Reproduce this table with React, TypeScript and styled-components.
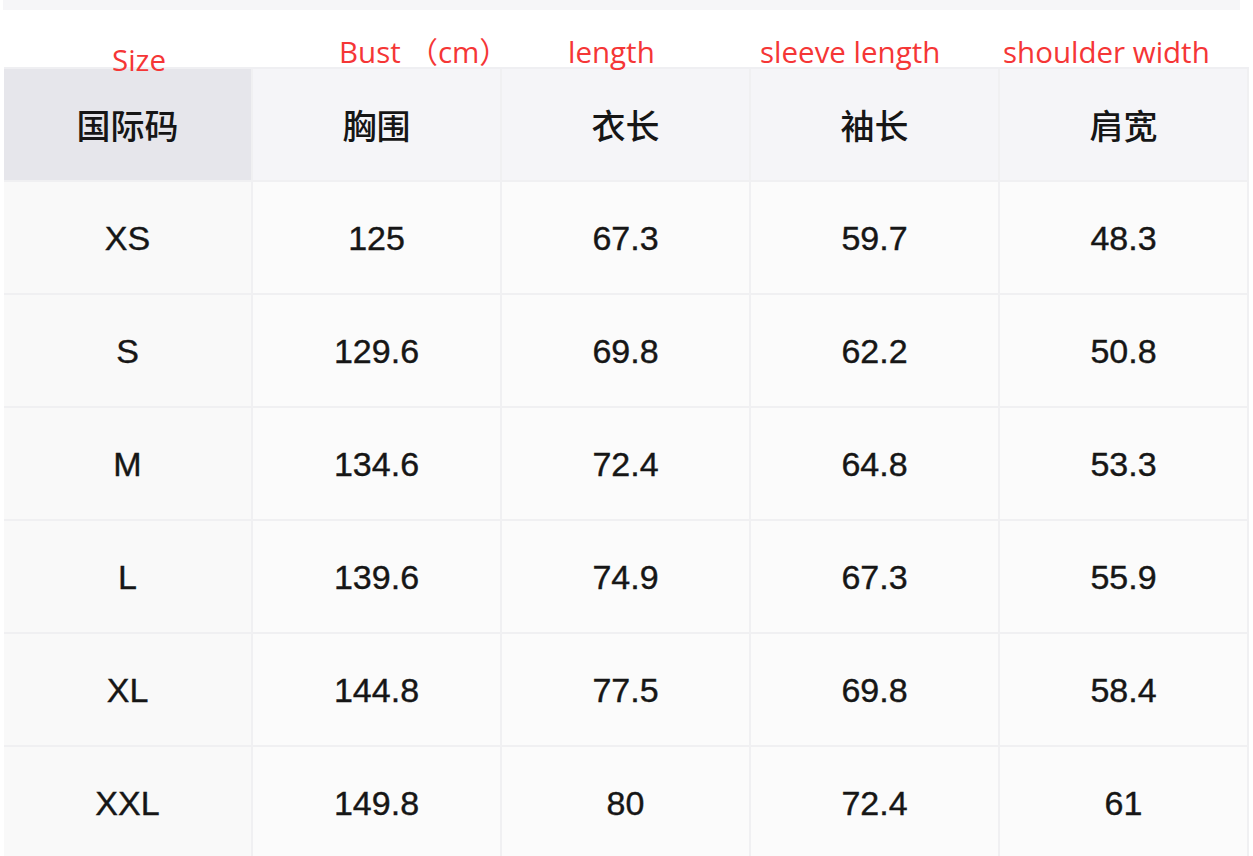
import React from "react";
import styled, { createGlobalStyle } from "styled-components";

const Global = createGlobalStyle`
  html, body { margin: 0; padding: 0; background: #ffffff; }
  body { width: 1253px; height: 856px; overflow: hidden; }
`;

const Page = styled.div`
  width: 1253px;
  height: 856px;
  background: #ffffff;
  display: flex;
  flex-direction: column;
  overflow: hidden;
`;

const TopStrip = styled.div`
  height: 10px;
  margin: 0 13px 0 3px;
  background: #f6f6f8;
  flex: none;
`;

const LabelRow = styled.div`
  height: 57px;
  margin: 0 4px 0 4px;
  display: grid;
  grid-template-columns: repeat(5, 249px);
  position: relative;
  z-index: 2;
  flex: none;
`;

const Label = styled.div<{ $left: number; $top: number }>`
  padding-left: ${(p) => p.$left}px;
  padding-top: ${(p) => p.$top}px;
  font-family: "Open Sans", "Noto Sans CJK SC", sans-serif;
  font-size: 29.5px;
  line-height: 40px;
  color: #f53636;
  white-space: nowrap;
  height: 0;
  overflow: visible;
`;

const Table = styled.div`
  margin: 0 4px;
  display: grid;
  grid-template-columns: repeat(5, 249px);
  grid-auto-rows: 113px;
  border-top: 2px solid #efeff2;
`;

const Cell = styled.div<{ $head?: boolean; $first?: boolean }>`
  display: flex;
  align-items: center;
  justify-content: center;
  background: ${(p) =>
    p.$head ? (p.$first ? "#e6e6eb" : "#f5f5f8") : p.$first ? "#f9f9f9" : "#fbfbfb"};
  border-right: 2px solid #f0f0f2;
  border-bottom: 2px solid #f0f0f2;
  box-sizing: border-box;
  color: #161616;
  font-family: ${(p) =>
    p.$head ? `"Noto Sans CJK SC", sans-serif` : `"Liberation Sans", Arial, sans-serif`};
  font-size: 34px;
  font-weight: ${(p) => (p.$head ? 500 : 400)};
  -webkit-text-stroke: ${(p) => (p.$head ? 0 : 0.4)}px #161616;
  padding-top: ${(p) => (p.$head ? 0 : 1)}px;
`;

const headers = ["国际码", "胸围", "衣长", "袖长", "肩宽"];
const rows = [
  ["XS", "125", "67.3", "59.7", "48.3"],
  ["S", "129.6", "69.8", "62.2", "50.8"],
  ["M", "134.6", "72.4", "64.8", "53.3"],
  ["L", "139.6", "74.9", "67.3", "55.9"],
  ["XL", "144.8", "77.5", "69.8", "58.4"],
  ["XXL", "149.8", "80", "72.4", "61"],
];

const labels = [
  { text: "Size", left: 108, top: 30 },
  { text: "Bust （cm）", left: 86, top: 22 },
  { text: "length", left: 66, top: 22 },
  { text: "sleeve length", left: 9, top: 22 },
  { text: "shoulder width", left: 3, top: 22 },
];

export default function App() {
  return (
    <Page>
      <Global />
      <TopStrip />
      <LabelRow>
        {labels.map((l) => (
          <Label key={l.text} $left={l.left} $top={l.top}>
            {l.text}
          </Label>
        ))}
      </LabelRow>
      <Table>
        {headers.map((h, i) => (
          <Cell key={h} $head $first={i === 0}>
            {h}
          </Cell>
        ))}
        {rows.map((r) =>
          r.map((v, i) => (
            <Cell key={r[0] + i} $first={i === 0}>
              {v}
            </Cell>
          ))
        )}
      </Table>
    </Page>
  );
}
